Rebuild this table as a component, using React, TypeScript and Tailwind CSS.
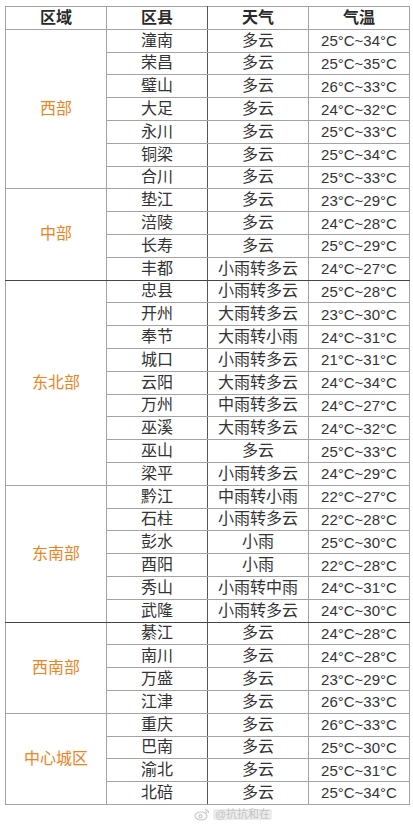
import React from 'react'

type Row = [string, string, string]
type Group = { region: string; rows: Row[]; darkBottom?: boolean }

const groups: Group[] = [
  {
    region: '西部',
    rows: [
      ['潼南', '多云', '25°C~34°C'],
      ['荣昌', '多云', '25°C~35°C'],
      ['璧山', '多云', '26°C~33°C'],
      ['大足', '多云', '24°C~32°C'],
      ['永川', '多云', '25°C~33°C'],
      ['铜梁', '多云', '25°C~34°C'],
      ['合川', '多云', '25°C~33°C'],
    ],
  },
  {
    region: '中部',
    darkBottom: true,
    rows: [
      ['垫江', '多云', '23°C~29°C'],
      ['涪陵', '多云', '24°C~28°C'],
      ['长寿', '多云', '25°C~29°C'],
      ['丰都', '小雨转多云', '24°C~27°C'],
    ],
  },
  {
    region: '东北部',
    rows: [
      ['忠县', '小雨转多云', '25°C~28°C'],
      ['开州', '大雨转多云', '23°C~30°C'],
      ['奉节', '大雨转小雨', '24°C~31°C'],
      ['城口', '小雨转多云', '21°C~31°C'],
      ['云阳', '大雨转多云', '24°C~34°C'],
      ['万州', '中雨转多云', '24°C~27°C'],
      ['巫溪', '大雨转多云', '24°C~32°C'],
      ['巫山', '多云', '25°C~33°C'],
      ['梁平', '小雨转多云', '24°C~29°C'],
    ],
  },
  {
    region: '东南部',
    darkBottom: true,
    rows: [
      ['黔江', '中雨转小雨', '22°C~27°C'],
      ['石柱', '小雨转多云', '22°C~28°C'],
      ['彭水', '小雨', '25°C~30°C'],
      ['酉阳', '小雨', '22°C~28°C'],
      ['秀山', '小雨转中雨', '24°C~31°C'],
      ['武隆', '小雨转多云', '24°C~30°C'],
    ],
  },
  {
    region: '西南部',
    rows: [
      ['綦江', '多云', '24°C~28°C'],
      ['南川', '多云', '24°C~28°C'],
      ['万盛', '多云', '23°C~29°C'],
      ['江津', '多云', '26°C~33°C'],
    ],
  },
  {
    region: '中心城区',
    rows: [
      ['重庆', '多云', '26°C~33°C'],
      ['巴南', '多云', '25°C~30°C'],
      ['渝北', '多云', '25°C~31°C'],
      ['北碚', '多云', '25°C~34°C'],
    ],
  },
]

const cell = 'border border-[#a3a3a3] p-0 text-center leading-none'

export default function App() {
  return (
    <div
      className="w-[413px] h-[824px] bg-white text-[#333] pt-[6px] pl-[5px]"
      style={{ fontFamily: '"Liberation Sans", "Noto Sans CJK SC", sans-serif' }}
    >
      <table className="table-fixed border-collapse w-[404px]">
        <colgroup>
          <col className="w-[101px]" />
          <col className="w-[101px]" />
          <col className="w-[101px]" />
          <col className="w-[101px]" />
        </colgroup>
        <thead>
          <tr className="h-[22.8px]">
            <th className={`${cell} text-[16px] font-bold text-[#2a2a2a]`}>区域</th>
            <th className={`${cell} text-[16px] font-bold text-[#2a2a2a] border-r-[#555]`}>区县</th>
            <th className={`${cell} text-[16px] font-bold text-[#2a2a2a]`}>天气</th>
            <th className={`${cell} text-[16px] font-bold text-[#2a2a2a]`}>气温</th>
          </tr>
        </thead>
        <tbody>
          {groups.map((g) =>
            g.rows.map((r, i) => {
              const last = i === g.rows.length - 1
              const dark = g.darkBottom && last ? 'border-b-[#444]' : ''
              return (
                <tr key={g.region + r[0]} className="h-[22.8px]">
                  {i === 0 && (
                    <td
                      rowSpan={g.rows.length}
                      className={`${cell} text-[16px] text-[#f0821e] ${g.darkBottom ? 'border-b-[#444]' : ''}`}
                    >
                      {g.region}
                    </td>
                  )}
                  <td className={`${cell} text-[16px] border-r-[#555] ${dark}`}>{r[0]}</td>
                  <td className={`${cell} text-[16px] ${dark}`}>{r[1]}</td>
                  <td className={`${cell} text-[15px] ${dark}`}>{r[2]}</td>
                </tr>
              )
            }),
          )}
        </tbody>
      </table>
      <div className="flex items-center justify-center gap-[3px] mt-[3px] ml-[48px] text-[11px] text-[#c4c4c4] leading-none">
        <svg width="16" height="13" viewBox="0 0 16 13" fill="none" stroke="#c8c8c8" strokeWidth="1.2">
          <ellipse cx="7" cy="8" rx="6" ry="4" />
          <circle cx="6.5" cy="8.3" r="1.6" />
          <path d="M11 1.5a3.5 3.5 0 0 1 3.5 3.5" />
          <path d="M11 3.5a1.5 1.5 0 0 1 1.5 1.5" />
        </svg>
        <span className="bg-[#ededed] px-[2px] rounded-[2px]">@抗抗和在</span>
      </div>
    </div>
  )
}
